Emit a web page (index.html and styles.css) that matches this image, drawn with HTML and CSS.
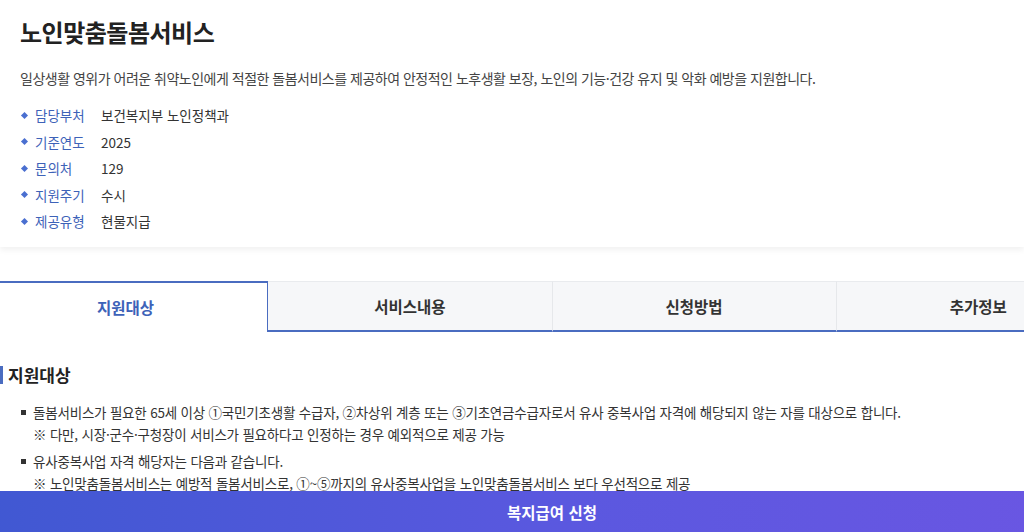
FILE: index.html
```html
<!DOCTYPE html>
<html lang="ko">
<head>
    <title>노인맞춤돌봄서비스</title>
    <meta charset="utf-8">
    <meta name="viewport" content="width=device-width, initial-scale=1">
    <link rel="stylesheet" href="styles.css">
</head>
<body>
    <div class="summary">
        <h1>노인맞춤돌봄서비스</h1>
        <p class="desc">일상생활 영위가 어려운 취약노인에게 적절한 돌봄서비스를 제공하여 안정적인 노후생활 보장, 노인의 기능·건강 유지 및 악화 예방을 지원합니다.</p>
        <ul class="info">
            <li><span class="label">담당부처</span><span>보건복지부 노인정책과</span></li>
            <li><span class="label">기준연도</span><span>2025</span></li>
            <li><span class="label">문의처</span><span>129</span></li>
            <li><span class="label">지원주기</span><span>수시</span></li>
            <li><span class="label">제공유형</span><span>현물지급</span></li>
        </ul>
    </div>

    <div class="detail">
        <div class="tabs">
            <div class="tab active">지원대상</div>
            <div class="tab">서비스내용</div>
            <div class="tab">신청방법</div>
            <div class="tab">추가정보</div>
        </div>

        <div class="panel">
            <h2>지원대상</h2>
            <ul class="items">
                <li>
                    돌봄서비스가 필요한 65세 이상 ①국민기초생활 수급자, ②차상위 계층 또는 ③기초연금수급자로서 유사 중복사업 자격에 해당되지 않는 자를 대상으로 합니다.<br>
                    ※ 다만, 시장·군수·구청장이 서비스가 필요하다고 인정하는 경우 예외적으로 제공 가능
                </li>
                <li>
                    유사중복사업 자격 해당자는 다음과 같습니다.<br>
                    ※ 노인맞춤돌봄서비스는 예방적 돌봄서비스로, ①~⑤까지의 유사중복사업을 노인맞춤돌봄서비스 보다 우선적으로 제공
                </li>
            </ul>
        </div>

        <button class="apply-btn">복지급여 신청</button>
    </div>
</body>
</html>
```

FILE: styles.css
```css
* { margin: 0; padding: 0; box-sizing: border-box; }
html, body { overflow: hidden; }
body { font-family: "Noto Sans CJK KR", "Noto Sans", sans-serif; background: #fff; color: #333; height: 532px; }
ul { list-style: none; }

.summary { background: #fff; padding: 16px 20px 12px; box-shadow: 0 3px 6px rgba(0,0,0,0.06); position: relative; }
.summary h1 { font-size: 24px; line-height: 32px; font-weight: 700; color: #222; letter-spacing: -0.5px; }
.desc { margin-top: 20px; font-size: 14px; line-height: 20px; color: #444; letter-spacing: -0.5px; }
.info { margin-top: 14px; }
.info li { display: flex; align-items: center; height: 26.5px; font-size: 13.5px; color: #333; }
.info li::before { content: ""; width: 5px; height: 5px; background: #4a6fd0; transform: rotate(45deg); margin: 0 8px 0 2px; flex-shrink: 0; }
.info .label { width: 66px; color: #3d62b8; }

.detail { margin-left: -16px; width: 1136px; margin-top: 34px; }
.tabs { display: flex; }
.tab { flex: 1; height: 51px; display: flex; align-items: center; justify-content: center; font-size: 15.5px; font-weight: 700; color: #333; background: #f6f7f9; border-top: 1px solid #e9ebee; border-left: 1px solid #e6e8eb; border-bottom: 2px solid #4a6cc0; }
.tab.active { background: #fff; color: #3d62b8; border-top: 2px solid #4a6cc0; border-right: 1px solid #4a6cc0; border-left: none; border-bottom: none; }
.tab.active + .tab { border-left: none; }

.panel { padding: 31px 0 0 16px; }
.panel h2 { font-size: 17px; line-height: 18px; font-weight: 700; color: #222; padding-left: 5px; border-left: 3px solid #4a6cc0; margin: 3px 0; }
.items { margin-top: 17px; padding-left: 21px; }
.items li { position: relative; padding-left: 12px; font-size: 13.5px; line-height: 22px; color: #333; margin-bottom: 5px; letter-spacing: -0.2px; }
.items li::before { content: ""; position: absolute; left: 0; top: 9px; width: 5px; height: 5px; background: #333; }

.apply-btn { position: fixed; left: -16px; bottom: 0; width: 1136px; height: 41px; border: none; background: linear-gradient(90deg, #4058d2 0%, #5a58df 50%, #6c56e3 100%); color: #fff; font-family: inherit; font-size: 15.5px; font-weight: 700; cursor: pointer; }
```
